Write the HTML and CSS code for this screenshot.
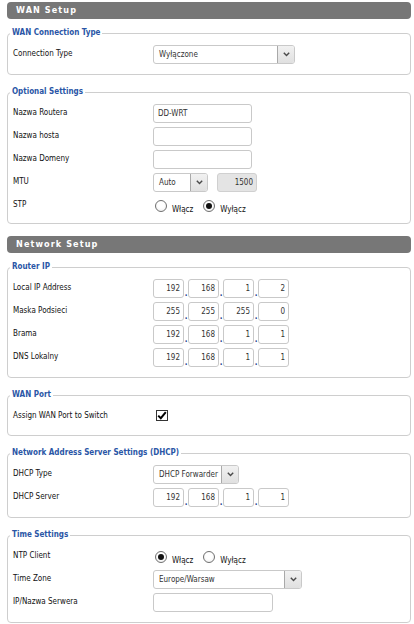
FILE: index.html
```html
<!DOCTYPE html>
<html lang="pl">
<head>
<meta charset="utf-8">
<title>WAN Setup</title>
<link rel="stylesheet" href="styles.css">
</head>
<body>
<div class="page">
  <h2 class="bar">WAN Setup</h2>

  <fieldset class="fs">
    <legend>WAN Connection Type</legend>
    <div class="rows">
      <div class="row">
        <div class="lbl">Connection Type</div>
        <div class="select w142"><span class="val">Wyłączone</span><span class="arrow"><svg width="7" height="5" viewBox="0 0 7 5"><path d="M0.8 0.8 L3.5 3.6 L6.2 0.8" fill="none" stroke="#4a4a4a" stroke-width="1.4"/></svg></span></div>
      </div>
    </div>
  </fieldset>

  <fieldset class="fs pb8">
    <legend>Optional Settings</legend>
    <div class="rows">
      <div class="row"><div class="lbl">Nazwa Routera</div><input class="inp w99" type="text" value="DD-WRT"></div>
      <div class="row"><div class="lbl">Nazwa hosta</div><input class="inp w99" type="text" value=""></div>
      <div class="row"><div class="lbl">Nazwa Domeny</div><input class="inp w99" type="text" value=""></div>
      <div class="row">
        <div class="lbl">MTU</div>
        <div class="select w55"><span class="val">Auto</span><span class="arrow"><svg width="7" height="5" viewBox="0 0 7 5"><path d="M0.8 0.8 L3.5 3.6 L6.2 0.8" fill="none" stroke="#4a4a4a" stroke-width="1.4"/></svg></span></div>
        <input class="inp dis w40" type="text" value="1500" disabled>
      </div>
      <div class="row">
        <div class="lbl">STP</div>
        <div class="radios">
          <span class="radio"></span><span class="rtext">Włącz</span>
          <span class="radio on"><span class="dot"></span></span><span class="rtext">Wyłącz</span>
        </div>
      </div>
    </div>
  </fieldset>

  <h2 class="bar bar2">Network Setup</h2>

  <fieldset class="fs">
    <legend>Router IP</legend>
    <div class="rows">
      <div class="row"><div class="lbl">Local IP Address</div>
        <div class="ip"><input class="oct" value="192"><span class="dt">.</span><input class="oct" value="168"><span class="dt">.</span><input class="oct" value="1"><span class="dt">.</span><input class="oct" value="2"></div></div>
      <div class="row"><div class="lbl">Maska Podsieci</div>
        <div class="ip"><input class="oct" value="255"><span class="dt">.</span><input class="oct" value="255"><span class="dt">.</span><input class="oct" value="255"><span class="dt">.</span><input class="oct" value="0"></div></div>
      <div class="row"><div class="lbl">Brama</div>
        <div class="ip"><input class="oct" value="192"><span class="dt">.</span><input class="oct" value="168"><span class="dt">.</span><input class="oct" value="1"><span class="dt">.</span><input class="oct" value="1"></div></div>
      <div class="row"><div class="lbl">DNS Lokalny</div>
        <div class="ip"><input class="oct" value="192"><span class="dt">.</span><input class="oct" value="168"><span class="dt">.</span><input class="oct" value="1"><span class="dt">.</span><input class="oct" value="1"></div></div>
    </div>
  </fieldset>

  <fieldset class="fs pb9">
    <legend>WAN Port</legend>
    <div class="rows">
      <div class="row"><div class="lbl">Assign WAN Port to Switch</div>
        <span class="check"><svg width="10" height="9" viewBox="0 0 10 9"><path d="M1.2 4.6 L3.8 7.2 L8.8 1.2" fill="none" stroke="#000" stroke-width="2"/></svg></span>
      </div>
    </div>
  </fieldset>

  <fieldset class="fs">
    <legend>Network Address Server Settings (DHCP)</legend>
    <div class="rows">
      <div class="row"><div class="lbl">DHCP Type</div>
        <div class="select w86"><span class="val">DHCP Forwarder</span><span class="arrow"><svg width="7" height="5" viewBox="0 0 7 5"><path d="M0.8 0.8 L3.5 3.6 L6.2 0.8" fill="none" stroke="#4a4a4a" stroke-width="1.4"/></svg></span></div>
      </div>
      <div class="row"><div class="lbl">DHCP Server</div>
        <div class="ip"><input class="oct" value="192"><span class="dt">.</span><input class="oct" value="168"><span class="dt">.</span><input class="oct" value="1"><span class="dt">.</span><input class="oct" value="1"></div></div>
    </div>
  </fieldset>

  <fieldset class="fs">
    <legend>Time Settings</legend>
    <div class="rows">
      <div class="row"><div class="lbl">NTP Client</div>
        <div class="radios">
          <span class="radio on"><span class="dot"></span></span><span class="rtext">Włącz</span>
          <span class="radio"></span><span class="rtext">Wyłącz</span>
        </div>
      </div>
      <div class="row"><div class="lbl">Time Zone</div>
        <div class="select w149"><span class="val">Europe/Warsaw</span><span class="arrow"><svg width="7" height="5" viewBox="0 0 7 5"><path d="M0.8 0.8 L3.5 3.6 L6.2 0.8" fill="none" stroke="#4a4a4a" stroke-width="1.4"/></svg></span></div>
      </div>
      <div class="row"><div class="lbl">IP/Nazwa Serwera</div><input class="inp w120" type="text" value=""></div>
    </div>
  </fieldset>
</div>
</body>
</html>
```

FILE: styles.css
```css
* { box-sizing: border-box; }

html, body {
  margin: 0;
  background: #ffffff;
}

body {
  font-family: "DejaVu Sans Condensed", "DejaVu Sans", sans-serif;
  font-size: 8px;
  color: #111;
}

.page {
  padding: 2px 3px 0 7px;
}

.bar {
  margin: 0;
  height: 17px;
  line-height: 17px;
  padding-left: 9px;
  background: #777777;
  color: #ffffff;
  border-radius: 4px;
  font-size: 9px;
  font-weight: bold;
  letter-spacing: 1.1px;
}

.bar2 {
  margin-top: 12px;
}

.fs {
  margin: 12px 0 0;
  padding: 7px 5px 10px;
  border: 1px solid #cecece;
  border-radius: 4px;
  min-width: 0;
}

.bar + .fs {
  margin-top: 9px;
}

.pb8 { padding-bottom: 8px; }
.pb9 { padding-bottom: 9px; }

legend {
  color: #2a56a6;
  font-weight: bold;
  font-size: 8px;
  line-height: 10px;
  padding: 0 2px;
  margin-left: -3px;
}

.rows {
  display: flex;
  flex-direction: column;
  gap: 4px;
}

.row {
  display: flex;
  align-items: flex-start;
  height: 19px;
}

.lbl {
  width: 140px;
  flex: none;
  line-height: 12px;
  padding-top: 3px;
  color: #111;
}

.inp {
  height: 19px;
  border: 1px solid #c9c9c9;
  border-radius: 3px;
  background: #fff;
  font-family: inherit;
  font-size: 8px;
  color: #333;
  padding: 0 4px;
  margin: 0;
  outline: none;
}

.w99 { width: 99px; }
.w120 { width: 120px; }
.w40 { width: 40px; }
.w55 { width: 55px; }
.w86 { width: 86px; }
.w142 { width: 142px; }
.w149 { width: 149px; }

.dis {
  margin-left: 9px;
  background: #e4e4e4;
  border-color: #d0d0d0;
  text-align: right;
  color: #333;
  padding-right: 3px;
}

.select {
  display: flex;
  height: 19px;
  border: 1px solid #c9c9c9;
  border-radius: 3px;
  background: #fff;
  overflow: hidden;
}

.val {
  flex: 1;
  line-height: 17px;
  padding-left: 5px;
  color: #333;
  white-space: nowrap;
  overflow: hidden;
}

.arrow {
  flex: none;
  width: 17px;
  display: flex;
  align-items: center;
  justify-content: center;
  background: linear-gradient(#f1f1f1, #e0e0e0);
  border-left: 1px solid #a9a9a9;
}

.ip {
  display: flex;
  align-items: flex-end;
}

.oct {
  width: 31px;
  height: 19px;
  border: 1px solid #c9c9c9;
  border-radius: 3px;
  background: #fff;
  font-family: inherit;
  font-size: 8px;
  color: #333;
  text-align: right;
  padding: 0 3px 0 0;
  margin: 0;
}

.dt {
  width: 4px;
  text-align: center;
  line-height: 8px;
  color: #1d3f8a;
  font-weight: bold;
}

.radios {
  display: flex;
  align-items: flex-end;
  padding-left: 2px;
  padding-top: 4px;
}

.radio {
  width: 12px;
  height: 12px;
  border: 1px solid #6f6f6f;
  border-radius: 50%;
  background: radial-gradient(circle at 50% 40%, #ffffff 40%, #e9e9e9);
  display: flex;
  align-items: center;
  justify-content: center;
  flex: none;
}

.dot {
  width: 6px;
  height: 6px;
  border-radius: 50%;
  background: #111;
}

.rtext {
  margin-left: 5px;
  margin-right: 10px;
  line-height: 9px;
  margin-bottom: -2px;
  color: #111;
}

.check {
  margin-left: 3px;
  margin-top: 3px;
  width: 12px;
  height: 11px;
  border: 1px solid #333;
  background: #fff;
  display: flex;
  align-items: center;
  justify-content: center;
}
```
